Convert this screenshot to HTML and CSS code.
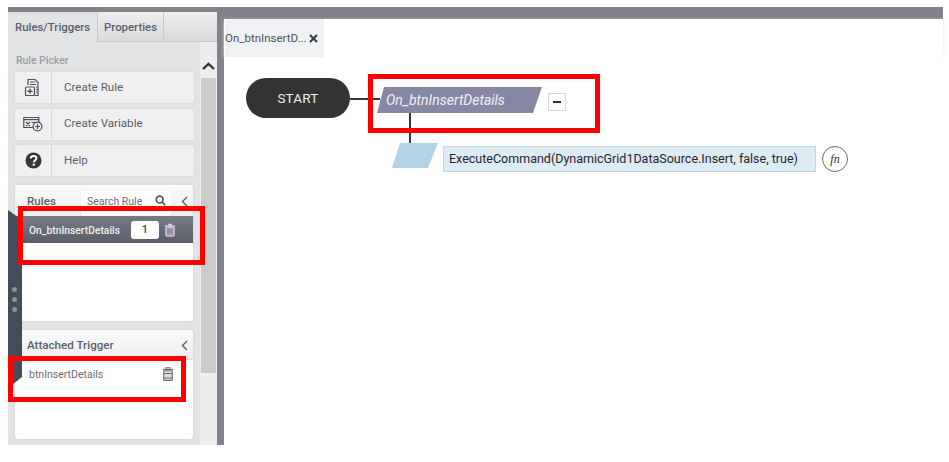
FILE: index.html
```html
<!DOCTYPE html>
<html lang="en">
<head>
<meta charset="utf-8">
<title>Rules/Triggers</title>
<link rel="stylesheet" href="styles.css">
</head>
<body>
<div class="app">
  <div class="topbar"></div>
  <div class="workspace">
    <aside class="sidebar">
      <div class="tabs">
        <div class="tab tab-active">Rules/Triggers</div>
        <div class="tab tab-props">Properties</div>
        <div class="tab-rest"></div>
      </div>
      <div class="side-body">
        <div class="pane">
          <div class="picker-title">Rule Picker</div>
          <div class="btn">
            <span class="btn-icon">
              <svg width="18" height="19" viewBox="0 0 18 19" fill="none" stroke="#4a4f58" stroke-width="1.2"><path d="M4 7V1.5h7l3 3V6"/><path d="M14 6v11.5h-3"/><path d="M6 4h5M6 6.5h6"/><path d="M12 9h1.5M12 11.5h1.5M12 14h1.5"/><rect x="1.5" y="9" width="9" height="8.5" rx="1"/><path d="M3.5 13.2h5M6 10.8v5" stroke-width="1.4"/></svg>
            </span>
            <span class="btn-label">Create Rule</span>
          </div>
          <div class="btn">
            <span class="btn-icon">
              <svg width="20" height="16" viewBox="0 0 20 16" fill="none" stroke="#4a4f58" stroke-width="1.2"><path d="M11 11.5H.8V1.5h15V6"/><path d="M.8 3.6h15"/><path d="M3 6l4 4M7 6l-4 4M8.5 6.5h4"/><circle cx="14.5" cy="10.5" r="4.4" fill="#f0f0f1"/><path d="M12 10.5h5M14.5 8v5"/></svg>
            </span>
            <span class="btn-label">Create Variable</span>
          </div>
          <div class="btn">
            <span class="btn-icon">
              <svg width="17" height="17" viewBox="0 0 17 17"><circle cx="8.5" cy="8.5" r="8" fill="#33373d"/><path d="M5.7 6.6c0-1.7 1.3-2.7 2.9-2.7s2.8 1 2.8 2.4c0 2.2-2.6 2.2-2.6 4" fill="none" stroke="#fff" stroke-width="2"/><rect x="7.7" y="11.6" width="2.1" height="2.1" fill="#fff"/></svg>
            </span>
            <span class="btn-label">Help</span>
          </div>
          <section class="card card-rules">
            <header class="card-head">
              <span class="card-title">Rules</span>
              <span class="search">
                <span class="search-text">Search Rule</span>
                <svg width="11" height="11" viewBox="0 0 11 11" fill="none" stroke="#50555e" stroke-width="1.7"><circle cx="4.6" cy="4.6" r="3.4"/><path d="M7.2 7.2l3 3"/></svg>
              </span>
              <svg class="chev" width="7" height="11" viewBox="0 0 7 11" fill="none" stroke="#5a6270" stroke-width="1.4"><path d="M6 1L1.5 5.5 6 10"/></svg>
            </header>
            <div class="rule-row">
              <span class="rule-name">On_btnInsertDetails</span>
              <span class="rule-count">1</span>
              <svg width="12" height="14" viewBox="0 0 12 14"><path d="M4 1.5h4M.8 3h10.4" stroke="#cfc8d8" stroke-width="1.6" fill="none"/><rect x="1.7" y="4" width="8.6" height="9.3" rx="1" fill="#b9aec4" stroke="#ddd6e2" stroke-width=".8"/><path d="M4 5.5v6M6 5.5v6M8 5.5v6" stroke="#77707f"/></svg>
            </div>
          </section>
          <section class="card card-trigger">
            <header class="card-head trigger-head">
              <span class="card-title">Attached Trigger</span>
              <svg class="chev" width="7" height="11" viewBox="0 0 7 11" fill="none" stroke="#5a6270" stroke-width="1.4"><path d="M6 1L1.5 5.5 6 10"/></svg>
            </header>
            <div class="trigger-row">
              <span class="trigger-name">btnInsertDetails</span>
              <svg width="12" height="14" viewBox="0 0 12 14" fill="none" stroke="#74706c" stroke-width="1.1"><path d="M4 2V.8h4V2"/><path d="M.8 2.6h10.4" stroke-width="1.4"/><rect x="1.7" y="3.8" width="8.6" height="9.6" rx="1" fill="#d8dde2"/><path d="M1.7 6.5h8.6M1.7 11h8.6"/></svg>
            </div>
          </section>
        </div>
        <div class="scrollbar">
          <div class="scroll-up">
            <svg width="13" height="8" viewBox="0 0 13 8" fill="none" stroke="#33373d" stroke-width="2.4"><path d="M1 7l5.5-5.2L12 7"/></svg>
          </div>
          <div class="scroll-thumb"></div>
        </div>
      </div>
      <div class="handle">
        <span class="dot"></span><span class="dot"></span><span class="dot"></span>
      </div>
      <div class="mark mark-rule"></div>
      <div class="mark mark-trigger"></div>
    </aside>
    <main class="main">
      <div class="doc-tabs">
        <div class="doc-tab">
          <span class="doc-tab-name">On_btnInsertD...</span>
          <svg width="9" height="9" viewBox="0 0 9 9" stroke="#3c4048" stroke-width="2.2"><path d="M1 1l7 7M8 1l-7 7"/></svg>
        </div>
      </div>
      <div class="canvas">
        <div class="conn conn-h"></div>
        <div class="conn conn-v"></div>
        <div class="start">START</div>
        <div class="rule-node"><span>On_btnInsertDetails</span></div>
        <div class="collapse"><span class="collapse-bar"></span></div>
        <div class="action-shape"></div>
        <div class="action-field">ExecuteCommand(DynamicGrid1DataSource.Insert, false, true)</div>
        <div class="fn"><span class="fn-text">fn</span></div>
        <div class="mark mark-node"></div>
      </div>
    </main>
  </div>
</div>
</body>
</html>
```
FILE: styles.css
```css
* { box-sizing: border-box; }
html, body { margin: 0; padding: 0; background: #fff; }
body { font-family: Roboto, "Liberation Sans", sans-serif; overflow: hidden; }

.app { width: 935px; height: 438px; margin: 7px 0 0 8px; display: flex; flex-direction: column; }
.topbar { height: 5px; background: #808389; flex: none; }
.workspace { flex: 1; display: flex; min-height: 0; }

.sidebar { position: relative; width: 209px; flex: none; background: #e2e3e5; display: flex; flex-direction: column; }
.tabs { height: 30px; display: flex; flex: none; }
.tab { font-size: 11.4px; font-weight: 500; color: #5b606a; line-height: 30px; }
.tab-active { width: 89px; padding-left: 7px; background: #e2e3e5; }
.tab-props { width: 67px; padding-left: 6px; border-left: 1px solid #c6c8cb; border-right: 1px solid #c6c8cb; border-bottom: 1px solid #c6c8cb; background: linear-gradient(#eeeeef, #d9dadc); }
.tab-rest { flex: 1; border-bottom: 1px solid #c6c8cb; background: linear-gradient(#eeeeef, #d9dadc); }

.side-body { flex: 1; display: flex; min-height: 0; }
.pane { width: 192px; padding: 0 6px 0 7px; flex: none; }
.picker-title { font-size: 10.4px; font-weight: 500; color: #9a9da4; line-height: 13px; padding: 12px 0 5px 1px; }
.btn { height: 31px; width: 179px; margin-bottom: 5.5px; background: #f0f0f1; border-radius: 3px; display: flex; align-items: center; box-shadow: 0 0 2px #cfd0d3; }
.btn-icon { width: 37px; height: 31px; flex: none; border-right: 1px solid #d3d6dc; display: flex; align-items: center; justify-content: center; }
.btn-label { font-size: 11.6px; color: #5b606a; padding: 0 0 2px 12px; }

.card { width: 178px; background: #fff; border-radius: 3px; box-shadow: 0 0 2px #c4c6c9; }
.card-rules { height: 136px; margin-top: 9px; }
.card-trigger { height: 109px; margin-top: 9px; }
.card-head { height: 31px; display: flex; align-items: flex-start; position: relative; background: linear-gradient(#fafafa, #eeeeef); padding: 1px 0 0 12px; border-radius: 3px 3px 0 0; }
.card-title { font-size: 11.6px; font-weight: 500; color: #5b606a; line-height: 31px; }
.search { position: absolute; left: 66px; top: 6px; width: 89px; height: 25px; background: #fff; border-radius: 2px; display: flex; align-items: flex-start; justify-content: space-between; padding: 4px 4px 0 6px; }
.search-text { font-size: 10.5px; color: #6a6e76; line-height: 13px; white-space: nowrap; }
.chev { position: absolute; right: 5px; top: 11px; }
.rule-row { height: 27px; display: flex; align-items: center; padding: 1px 0 0 14px; background: linear-gradient(#787b85, #5a5d67); }
.rule-name { font-size: 10.3px; font-weight: 500; color: #eceef0; width: 102px; white-space: nowrap; }
.rule-count { width: 28px; height: 18px; background: #fff; border-radius: 3px; font-size: 11px; font-weight: 500; color: #3c4048; text-align: center; line-height: 18px; margin-right: 5px; }
.trigger-head { height: 30px; padding-top: 0; border-bottom: 1px solid #dcdee2; }
.trigger-head .chev { top: 10px; }
.trigger-row { display: flex; align-items: flex-start; justify-content: space-between; padding: 7px 19px 0 14px; }
.trigger-name { font-size: 10.5px; color: #6a6e76; line-height: 14px; padding-top: 1px; }

.scrollbar { width: 17px; background: #eeeeef; flex: none; }
.scroll-up { height: 36px; display: flex; justify-content: center; padding-top: 20px; }
.scroll-thumb { height: 295px; width: 15px; margin-left: 1px; background: #cbcbcb; }

.handle { position: absolute; left: 0; top: 198px; width: 14px; height: 178px; background: #454c59; clip-path: polygon(0 0, 100% 10px, 100% 167px, 0 100%); display: flex; flex-direction: column; align-items: center; padding: 77px 2px 0 0; gap: 5px; }
.dot { width: 5px; height: 5px; border-radius: 50%; background: #8b9099; flex: none; }

.mark { position: absolute; border: 5px solid #f00; pointer-events: none; }
.mark-rule { left: 10px; top: 194px; width: 187px; height: 59px; }
.mark-trigger { left: 0; top: 344px; width: 178px; height: 46px; }
.mark-node { left: 144px; top: 17px; width: 232px; height: 59px; }

.main { flex: 1; display: flex; flex-direction: column; min-width: 0; border-top: 7px solid #808389; border-left: 7px solid #808389; }
.doc-tabs { height: 38px; flex: none; background: #fff; box-shadow: 0 1px 3px #e8e8e8; position: relative; }
.doc-tab { width: 99px; height: 38px; margin-left: 1px; background: #f0f1f3; display: flex; align-items: center; gap: 2px; }
.doc-tab-name { font-size: 11.5px; color: #4d525c; white-space: nowrap; }

.canvas { position: relative; flex: 1; background: #fff; }
.start { position: absolute; left: 22px; top: 21px; width: 104px; height: 40px; border-radius: 20px; background: #333; color: #eee; font-size: 13.5px; text-align: center; line-height: 40px; letter-spacing: .2px; }
.conn { position: absolute; background: #33363d; }
.conn-h { left: 126px; top: 41px; width: 30px; height: 2px; }
.conn-v { left: 185px; top: 56px; width: 2px; height: 30px; }
.rule-node { position: absolute; left: 153px; top: 30px; width: 165px; height: 26px; background: #8587a3; clip-path: polygon(7px 0, 100% 0, 156px 100%, 0 100%); color: #f2f3f7; font-size: 14px; font-style: italic; line-height: 26px; padding-left: 9px; white-space: nowrap; }
.collapse { position: absolute; left: 324px; top: 36px; width: 18px; height: 18px; background: #fff; border: 1px solid #d6d8de; display: flex; align-items: center; justify-content: center; }
.collapse-bar { width: 8px; height: 2px; background: #333; }
.action-shape { position: absolute; left: 168px; top: 86px; width: 46px; height: 25px; background: #b3d4e8; clip-path: polygon(8px 0, 100% 0, 36px 100%, 0 100%); }
.action-field { position: absolute; left: 219px; top: 89px; width: 373px; height: 26px; background: #ddebf5; border: 1px solid #c2d6e2; color: #23262b; font-size: 12.5px; line-height: 24px; padding-left: 5px; white-space: nowrap; }
.fn { position: absolute; left: 598px; top: 89px; width: 26px; height: 26px; border: 1px solid #6a6a6a; border-radius: 50%; display: flex; align-items: center; justify-content: center; }
.fn-text { font-family: "Liberation Serif", serif; font-style: italic; font-weight: 400; font-size: 12px; color: #333; }
```
